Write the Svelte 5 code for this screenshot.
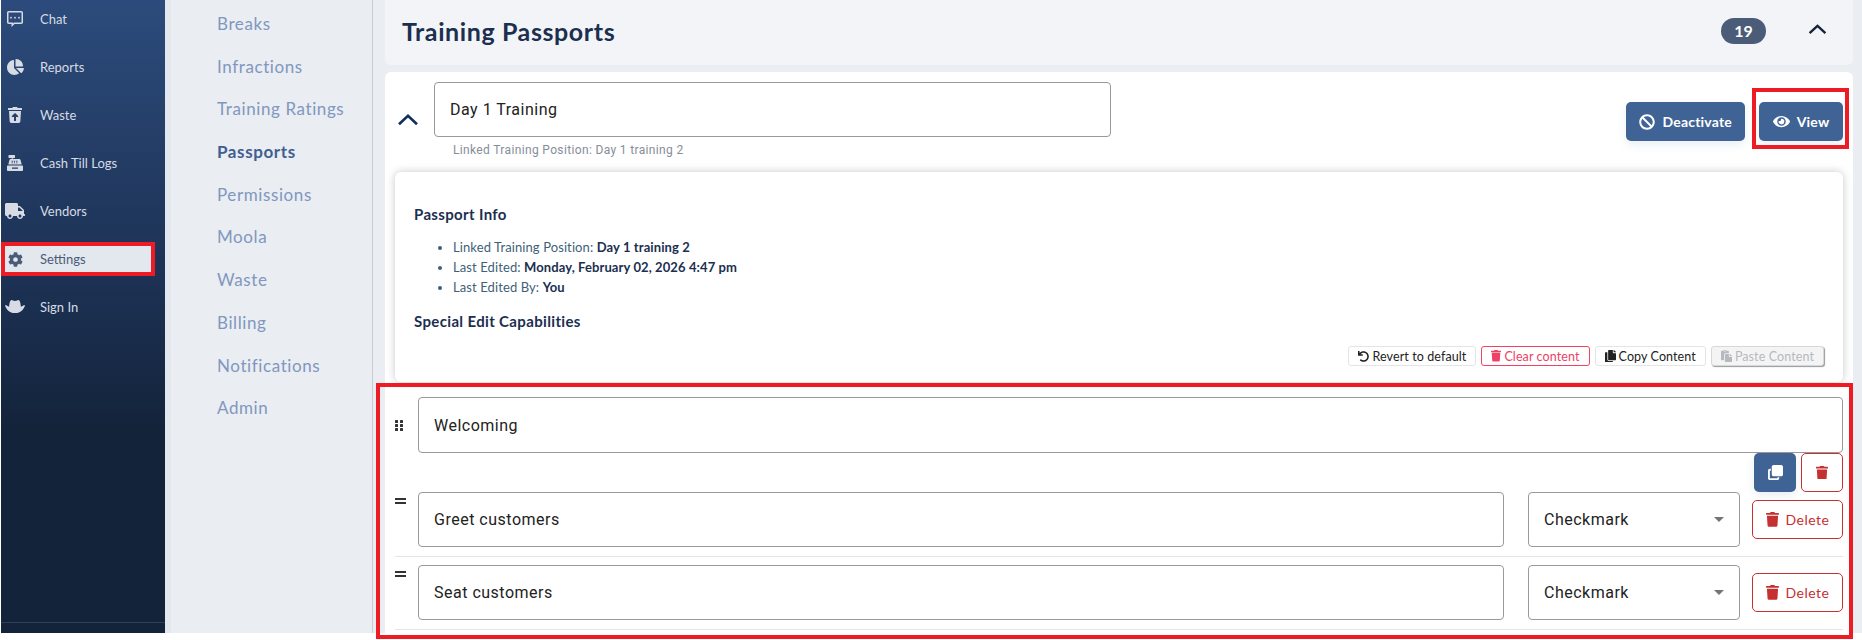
<script>
  const icons = {
    pie: { box: '0 0 576 512', d: 'M304 240V16.6c0-9 7-16.6 16-16.6C443.7 0 544 100.3 544 224c0 9-7.6 16-16.6 16H304zM32 272C32 150.7 122.1 50.3 239 34.3c9.2-1.3 17 6.1 17 15.4V288L412.5 444.5c6.7 6.7 6.2 17.7-1.5 23.1C371.8 495.6 323.8 512 272 512C139.5 512 32 404.6 32 272zm526.4 16c9.3 0 16.6 7.8 15.4 17c-7.7 55.9-34.6 105.6-73.9 142.3c-6 5.6-15.4 5.2-21.2-.7L320 288H558.4z' },
    restore: { box: '0 0 448 512', d: 'M53.2 467a48 48 0 0 0 47.9 45h245.8a48 48 0 0 0 47.9-45L416 128H32zm70.11-175.8l89.38-94.26a15.41 15.41 0 0 1 22.62 0l89.38 94.26c10.08 10.62 2.94 28.8-11.32 28.8H256v112a16 16 0 0 1-16 16h-32a16 16 0 0 1-16-16V320h-57.37c-14.26 0-21.4-18.18-11.32-28.8zM432 32H312l-9.4-18.7A24 24 0 0 0 281.1 0H166.8a23.72 23.72 0 0 0-21.4 13.3L136 32H16A16 16 0 0 0 0 48v32a16 16 0 0 0 16 16h416a16 16 0 0 0 16-16V48a16 16 0 0 0-16-16z' },
    truck: { box: '0 0 640 512', d: 'M624 352h-16V243.9c0-12.7-5.1-24.9-14.1-33.9L494 110.1c-9-9-21.2-14.1-33.9-14.1H416V48c0-26.5-21.5-48-48-48H48C21.5 0 0 21.5 0 48v320c0 26.5 21.5 48 48 48h16c0 53 43 96 96 96s96-43 96-96h128c0 53 43 96 96 96s96-43 96-96h48c8.8 0 16-7.2 16-16v-32c0-8.8-7.2-16-16-16zM160 464c-26.5 0-48-21.5-48-48s21.5-48 48-48 48 21.5 48 48-21.5 48-48 48zm320 0c-26.5 0-48-21.5-48-48s21.5-48 48-48 48 21.5 48 48-21.5 48-48 48zm80-208H416V144h44.1l99.9 99.9V256z' },
    cog: { box: '0 0 512 512', d: 'M487.4 315.7l-42.6-24.6c4.3-23.2 4.3-47 0-70.2l42.6-24.6c4.9-2.8 7.1-8.6 5.5-14-11.1-35.6-30-67.8-54.7-94.6-3.8-4.1-10-5.1-14.8-2.3L380.8 110c-17.9-15.4-38.5-27.3-60.8-35.1V25.8c0-5.6-3.9-10.5-9.4-11.7-36.7-8.2-74.3-7.8-109.2 0-5.5 1.2-9.4 6.1-9.4 11.7V75c-22.2 7.9-42.8 19.8-60.8 35.1L88.7 85.5c-4.9-2.8-11-1.9-14.8 2.3-24.7 26.7-43.6 58.9-54.7 94.6-1.7 5.4.6 11.2 5.5 14L67.3 221c-4.3 23.2-4.3 47 0 70.2l-42.6 24.6c-4.9 2.8-7.1 8.6-5.5 14 11.1 35.6 30 67.8 54.7 94.6 3.8 4.1 10 5.1 14.8 2.3l42.6-24.6c17.9 15.4 38.5 27.3 60.8 35.1v49.2c0 5.6 3.9 10.5 9.4 11.7 36.7 8.2 74.3 7.8 109.2 0 5.5-1.2 9.4-6.1 9.4-11.7v-49.2c22.2-7.9 42.8-19.8 60.8-35.1l42.6 24.6c4.9 2.8 11 1.9 14.8-2.3 24.7-26.7 43.6-58.9 54.7-94.6 1.5-5.5-.7-11.3-5.6-14.1zM256 336c-44.1 0-80-35.9-80-80s35.9-80 80-80 80 35.9 80 80-35.9 80-80 80z' },
    chat: { box: '0 0 512 512', d: 'M56 0h400c31 0 56 25 56 56v304c0 31-25 56-56 56H240l-96 96v-96H56c-31 0-56-25-56-56V56C0 25 25 0 56 0zm0 48c-4 0-8 4-8 8v304c0 4 4 8 8 8h136v28l28-28h236c4 0 8-4 8-8V56c0-4-4-8-8-8H56zm72 136a28 28 0 1 1 0 56 28 28 0 1 1 0-56zm128 0a28 28 0 1 1 0 56 28 28 0 1 1 0-56zm128 0a28 28 0 1 1 0 56 28 28 0 1 1 0-56z' },
    till: { box: '0 0 512 512', d: 'M64 0h176c9 0 16 7 16 16v64c0 9-7 16-16 16h-56v32h208c20 0 38 14 43 34l35 144H42l35-144c5-20 23-34 43-34h32V96H64c-9 0-16-7-16-16V16C48 7 55 0 64 0zm84 184v28h40v-28zm72 0v28h40v-28zm72 0v28h40v-28zm-144 52v28h40v-28zm72 0v28h40v-28zm72 0v28h40v-28zM32 336h448c18 0 32 14 32 32v112c0 18-14 32-32 32H32c-18 0-32-14-32-32V368c0-18 14-32 32-32zm128 64v40h192v-40z' },
    hat: { box: '0 0 640 448', d: 'M208 0c34 0 60 30 112 30S398 0 432 0c44 0 66 100 78 214 34-8 70-28 100-52 8-6 20-2 22 8 6 30-20 94-72 146-56 56-128 100-240 100S136 372 80 316C28 264 2 200 8 170c2-10 14-14 22-8 30 24 66 44 100 52C142 100 164 0 208 0z' },
    ban: { box: '0 0 512 512', d: 'M256 8C119.034 8 8 119.033 8 256s111.034 248 248 248 248-111.034 248-248S392.967 8 256 8zm130.108 117.892c65.448 65.448 70 165.481 20.677 235.637L150.47 105.216c70.204-49.356 170.226-44.735 235.638 20.676zM125.892 386.108c-65.448-65.448-70-165.481-20.677-235.637L361.53 406.784c-70.203 49.356-170.226 44.736-235.638-20.676z' },
    eye: { box: '0 0 576 512', d: 'M572.52 241.4C518.29 135.59 410.93 64 288 64S57.68 135.64 3.48 241.41a32.35 32.35 0 0 0 0 29.19C57.71 376.41 165.07 448 288 448s230.32-71.64 284.52-177.41a32.35 32.35 0 0 0 0-29.19zM288 400a144 144 0 1 1 144-144 143.93 143.93 0 0 1-144 144zm0-240a95.31 95.31 0 0 0-25.31 3.79 47.85 47.85 0 0 1-66.9 66.9A95.78 95.78 0 1 0 288 160z' },
    undo: { box: '0 0 512 512', d: 'M212.333 224.333H12c-6.627 0-12-5.373-12-12V12C0 5.373 5.373 0 12 0h48c6.627 0 12 5.373 12 12v78.112C117.773 39.279 184.26 7.47 258.175 8.007c136.906.994 246.448 111.623 246.157 248.532C504.041 393.258 393.12 504 256.333 504c-64.089 0-122.496-24.313-166.51-64.215-5.099-4.622-5.334-12.554-.467-17.42l33.967-33.967c4.474-4.474 11.662-4.717 16.401-.525C170.76 415.336 211.58 432 256.333 432c97.268 0 176-78.716 176-176 0-97.267-78.716-176-176-176-58.496 0-110.28 28.476-142.274 72.333h98.274c6.627 0 12 5.373 12 12v48c0 6.627-5.373 12-12 12z' },
    trash: { box: '0 0 448 512', d: 'M432 32H312l-9.4-18.7A24 24 0 0 0 281.1 0H166.8a23.72 23.72 0 0 0-21.4 13.3L136 32H16A16 16 0 0 0 0 48v32a16 16 0 0 0 16 16h416a16 16 0 0 0 16-16V48a16 16 0 0 0-16-16zM53.2 467a48 48 0 0 0 47.9 45h245.8a48 48 0 0 0 47.9-45L416 128H32z' },
    copy: { box: '0 0 448 512', d: 'M320 448v40c0 13.255-10.745 24-24 24H24c-13.255 0-24-10.745-24-24V120c0-13.255 10.745-24 24-24h72v296c0 30.879 25.121 56 56 56h168zm0-344V0H152c-13.255 0-24 10.745-24 24v368c0 13.255 10.745 24 24 24h272c13.255 0 24-10.745 24-24V128H344c-13.2 0-24-10.8-24-24zm120.971-31.029L375.029 7.029A24 24 0 0 0 358.059 0H352v96h96v-6.059a24 24 0 0 0-7.029-16.97z' },
    paste: { box: '0 0 448 512', d: 'M128 184c0-30.879 25.122-56 56-56h136V56c0-13.255-10.745-24-24-24h-80.61C204.306 12.89 183.637 0 160 0s-44.306 12.89-55.39 32H24C10.745 32 0 42.745 0 56v336c0 13.255 10.745 24 24 24h104V184zm32-144c13.255 0 24 10.745 24 24s-10.745 24-24 24-24-10.745-24-24 10.745-24 24-24zm184 248h104v200c0 13.255-10.745 24-24 24H184c-13.255 0-24-10.745-24-24V184c0-13.255 10.745-24 24-24h136v104c0 13.2 10.8 24 24 24zm104-38.059V256h-96v-96h6.059a24 24 0 0 1 16.97 7.029l65.941 65.941a24.002 24.002 0 0 1 7.03 16.971z' },
    clone: { box: '0 0 512 512', d: 'M192 0h256c35 0 64 29 64 64v256c0 35-29 64-64 64H192c-35 0-64-29-64-64V64c0-35 29-64 64-64zM64 128h32v64H64v256h256v-32h64v32c0 35-29 64-64 64H64c-35 0-64-29-64-64V192c0-35 29-64 64-64z' },
  }

  const mainNav = [
    { label: 'Chat', icon: 'chat', w: 16 },
    { label: 'Reports', icon: 'pie', w: 18 },
    { label: 'Waste', icon: 'restore', w: 14 },
    { label: 'Cash Till Logs', icon: 'till', w: 16 },
    { label: 'Vendors', icon: 'truck', w: 20 },
    { label: 'Settings', icon: 'cog', w: 15, active: true },
    { label: 'Sign In', icon: 'hat', w: 20 },
  ]

  const settingsNav = ['Breaks', 'Infractions', 'Training Ratings', 'Passports', 'Permissions', 'Moola', 'Waste', 'Billing', 'Notifications', 'Admin']

  const tasks = ['Greet customers', 'Seat customers']
</script>

{#snippet icon(name, width, cls = '')}
  <svg class={cls} viewBox={icons[name].box} style="width: {width}px" aria-hidden="true"><path d={icons[name].d} fill="currentColor" /></svg>
{/snippet}

{#snippet chevron()}
  <svg class="chevron" viewBox="0 0 18 10" aria-hidden="true"><path d="M1.5 8.5 9 1.5l7.5 7" fill="none" stroke="currentColor" stroke-width="2.2" /></svg>
{/snippet}

<div class="page">
  <aside class="sidebar">
    <nav>
      {#each mainNav as item}
        <div class="nav-item" class:active={item.active}>
          <span class="nav-icon">{@render icon(item.icon, item.w)}</span>
          <span>{item.label}</span>
        </div>
      {/each}
    </nav>
    <div class="sidebar-foot"></div>
  </aside>

  <div class="subnav">
    {#each settingsNav as label}
      <div class="subnav-item" class:current={label === 'Passports'}>{label}</div>
    {/each}
  </div>

  <main>
    <header class="title-bar">
      <h1>Training Passports</h1>
      <span class="badge">19</span>
      <span class="title-chevron">{@render chevron()}</span>
    </header>

    <section class="card">
      <div class="passport-head">
        <span class="head-chevron">{@render chevron()}</span>
        <div class="name-col">
          <div class="field">Day 1 Training</div>
          <p class="linked">Linked Training Position: Day 1 training 2</p>
        </div>
        <div class="head-actions">
          <button class="solid">{@render icon('ban', 16)} Deactivate</button>
          <div class="view-wrap">
            <button class="solid">{@render icon('eye', 17)} View</button>
            <span class="mark view-mark"></span>
          </div>
        </div>
      </div>

      <div class="info-panel">
        <h3>Passport Info</h3>
        <ul>
          <li>Linked Training Position: <b>Day 1 training 2</b></li>
          <li>Last Edited: <b>Monday, February 02, 2026 4:47 pm</b></li>
          <li>Last Edited By: <b>You</b></li>
        </ul>
        <h3 class="special">Special Edit Capabilities</h3>
        <div class="tools">
          <button class="tool">{@render icon('undo', 11)} Revert to default</button>
          <button class="tool danger">{@render icon('trash', 10)} Clear content</button>
          <button class="tool">{@render icon('copy', 11)} Copy Content</button>
          <button class="tool disabled">{@render icon('paste', 11)} Paste Content</button>
        </div>
      </div>

      <div class="sections">
        <span class="mark sections-mark"></span>
        <div class="section-row">
          <svg class="grip" viewBox="0 0 8 11" aria-hidden="true">
            {#each [0, 4, 8] as y}
              <rect x="0" {y} width="3" height="3" rx=".5" fill="#333" />
              <rect x="5" {y} width="3" height="3" rx=".5" fill="#333" />
            {/each}
          </svg>
          <div class="field grow">Welcoming</div>
        </div>
        <div class="section-actions">
          <button class="square solid">{@render icon('clone', 15)}</button>
          <button class="square outline">{@render icon('trash', 12)}</button>
        </div>
        {#each tasks as task}
          <div class="task-row">
            <span class="bars"></span>
            <div class="field grow">{task}</div>
            <div class="field select">Checkmark<span class="caret"></span></div>
            <button class="outline delete">{@render icon('trash', 13)} Delete</button>
          </div>
        {/each}
      </div>
    </section>
  </main>
</div>

<style>
  :global(body) {
    margin: 0;
    background: #fff;
    font-family: Lato, 'Open Sans', sans-serif;
  }

  .page {
    display: flex;
    align-items: flex-start;
    height: 640px;
    width: 1862px;
    overflow: hidden;
  }

  button { font-family: inherit; cursor: pointer; }

  /* main sidebar */
  .sidebar {
    box-sizing: border-box;
    width: 164px;
    height: 633px;
    margin-left: 1px;
    flex-shrink: 0;
    display: flex;
    flex-direction: column;
    justify-content: space-between;
    background: linear-gradient(#2c4b7c 0%, #1b2f50 48%, #13233a 68%, #13233a 100%);
    overflow: hidden;
  }

  nav { margin-top: -5px; }

  .nav-item {
    display: flex;
    align-items: center;
    height: 48px;
    font-size: 13px;
    color: #d6dbe4;
    position: relative;
  }

  .nav-icon {
    width: 39px;
    display: flex;
    justify-content: center;
    padding-right: 11px;
    box-sizing: border-box;
    flex-shrink: 0;
  }

  .nav-item svg { display: block; }

  .nav-item.active {
    color: #4a5c78;
    z-index: 1;
  }

  .nav-item.active::before {
    content: '';
    position: absolute;
    left: 0;
    top: 7px;
    box-sizing: border-box;
    width: 154px;
    height: 34px;
    background: #e3e7ee;
    border: 4px solid #ed1c24;
    z-index: -1;
  }

  .sidebar-foot {
    height: 10px;
    border-top: 1px solid #2f4059;
  }

  /* settings sub navigation */
  .subnav {
    box-sizing: border-box;
    width: 208px;
    height: 633px;
    flex-shrink: 0;
    padding: 3px 0 0 46px;
    background: #eaedf2;
    border-left: 6px solid #e3e7ee;
    border-right: 1px solid #c8ccd2;
  }

  .subnav-item {
    height: 42.7px;
    line-height: 42.7px;
    font-size: 17px;
    letter-spacing: 0.6px;
    color: #8097bf;
    white-space: nowrap;
  }

  .subnav-item.current {
    font-weight: 700;
    color: #3f5f92;
  }

  /* content */
  main {
    box-sizing: border-box;
    width: 1489px;
    height: 633px;
    padding: 0 9px 0 12px;
    background: #eaedf2;
  }

  .title-bar {
    display: flex;
    align-items: center;
    height: 65px;
    box-sizing: border-box;
    padding: 0 26px 4px 17px;
    background: #f3f4f7;
    border-radius: 0 0 6px 6px;
  }

  h1 {
    margin: 0;
    flex: 1;
    font-size: 25px;
    letter-spacing: 0.6px;
    font-weight: 700;
    color: #1b2f50;
  }

  .badge {
    width: 45px;
    height: 26px;
    line-height: 26px;
    text-align: center;
    border-radius: 13px;
    background: #4a5c78;
    color: #fff;
    font-size: 16px;
    font-weight: 700;
    margin-right: 42px;
  }

  .title-chevron { color: #13233a; display: block; width: 19px; height: 11px; margin-bottom: 3px; }
  .chevron { display: block; width: 100%; height: 100%; }

  .card {
    margin-top: 7px;
    height: 561px;
    box-sizing: border-box;
    padding: 10px 10px 0;
    background: #fff;
    border-radius: 6px 6px 0 0;
  }

  .passport-head {
    display: flex;
    height: 90px;
  }

  .head-chevron {
    width: 22px;
    height: 12px;
    margin: 32px 15px 0 2px;
    color: #13305c;
  }

  .name-col { width: 677px; }

  .field {
    box-sizing: border-box;
    height: 55px;
    display: flex;
    align-items: center;
    padding: 0 15px;
    border: 1px solid #999;
    border-radius: 4px;
    font-family: Roboto, sans-serif;
    font-size: 16px;
    letter-spacing: 0.5px;
    color: #222;
    background: #fff;
  }

  .linked {
    margin: 6px 0 0 19px;
    font-family: Roboto, sans-serif;
    font-size: 12px;
    letter-spacing: 0.35px;
    color: #868e99;
  }

  .head-actions {
    margin: 20px 0 0 auto;
    display: flex;
    gap: 14px;
    height: 39px;
  }

  .solid {
    display: inline-flex;
    align-items: center;
    justify-content: center;
    gap: 7px;
    height: 39px;
    padding: 0 13px;
    border: 0;
    border-radius: 5px;
    background: #3f6395;
    color: #fff;
    font-size: 14px;
    letter-spacing: 0.2px;
    font-weight: 700;
    box-shadow: 0 4px 10px rgba(63, 99, 149, 0.1);
  }

  .view-wrap { position: relative; }
  .view-wrap .solid { width: 84px; }

  /* red review annotations sitting over the screenshot */
  .mark {
    position: absolute;
    box-sizing: border-box;
    border: 4px solid #ed1c24;
    pointer-events: none;
  }

  .view-mark { left: -7px; right: -6px; top: -14px; bottom: -8px; }

  .info-panel {
    box-sizing: border-box;
    height: 210px;
    padding: 33px 19px 0 19px;
    border-radius: 6px;
    box-shadow: 0 0 8px rgba(0, 0, 0, 0.22);
    color: #1b2f50;
    position: relative;
  }

  h3 {
    margin: 0;
    font-size: 15px;
    letter-spacing: 0.35px;
    line-height: 18px;
    font-weight: 700;
    color: #1b2f50;
  }

  ul {
    margin: 14px 0 0;
    padding: 0 0 0 39px;
    font-size: 13px;
    letter-spacing: 0.1px;
    line-height: 20px;
    color: #3f5f78;
  }

  b { color: #1b2f50; }

  .special { margin-top: 15px; }

  .tools {
    display: flex;
    justify-content: flex-end;
    gap: 5px;
    margin-top: 16px;
  }

  .tool {
    display: inline-flex;
    align-items: center;
    gap: 3px;
    height: 20px;
    padding: 0 9px;
    background: #fff;
    border: 1px solid #e2e4e8;
    border-radius: 3px;
    font-size: 12.5px;
    letter-spacing: 0.1px;
    color: #222;
    white-space: nowrap;
  }

  .tool.danger { color: #ee4266; border-color: #ee4266; }

  .tool.disabled {
    color: #b6b9be;
    background: #f4f4f4;
    border-color: #d8d8d8;
    box-shadow: 1px 1px 1px #999;
  }

  /* sections */
  .sections {
    position: relative;
    padding-top: 15px;
  }

  .sections-mark { left: -19px; right: -10px; top: 1px; height: 256px; }

  .section-row {
    display: flex;
    align-items: center;
  }

  .grip { width: 8px; height: 11px; margin-right: 15px; flex-shrink: 0; }

  .grow { flex: 1; height: 56px; }

  .section-actions {
    display: flex;
    justify-content: flex-end;
    gap: 5px;
  }

  .square {
    width: 42px;
    height: 39px;
    padding: 0;
  }

  .outline {
    display: inline-flex;
    align-items: center;
    justify-content: center;
    background: #fff;
    border: 1px solid #c53030;
    border-radius: 5px;
    color: #c53030;
    font-size: 14px;
  }

  .task-row {
    display: flex;
    align-items: flex-start;
    padding-bottom: 9px;
    border-bottom: 1px solid #e3e5ea;
    margin-bottom: 8px;
    position: relative;
  }

  .task-row .grow { height: 55px; }

  .bars {
    width: 11px;
    height: 6px;
    margin: 6px 12px 0 0;
    border-top: 2px solid #333;
    border-bottom: 2px solid #333;
    box-sizing: border-box;
    flex-shrink: 0;
  }

  .select {
    width: 212px;
    margin-left: 24px;
    flex-shrink: 0;
    justify-content: space-between;
  }

  .caret {
    border-left: 5px solid transparent;
    border-right: 5px solid transparent;
    border-top: 5px solid #757575;
  }

  .delete {
    width: 91px;
    height: 39px;
    margin: 8px 0 0 12px;
    gap: 7px;
    flex-shrink: 0;
    letter-spacing: 0.5px;
  }
</style>
